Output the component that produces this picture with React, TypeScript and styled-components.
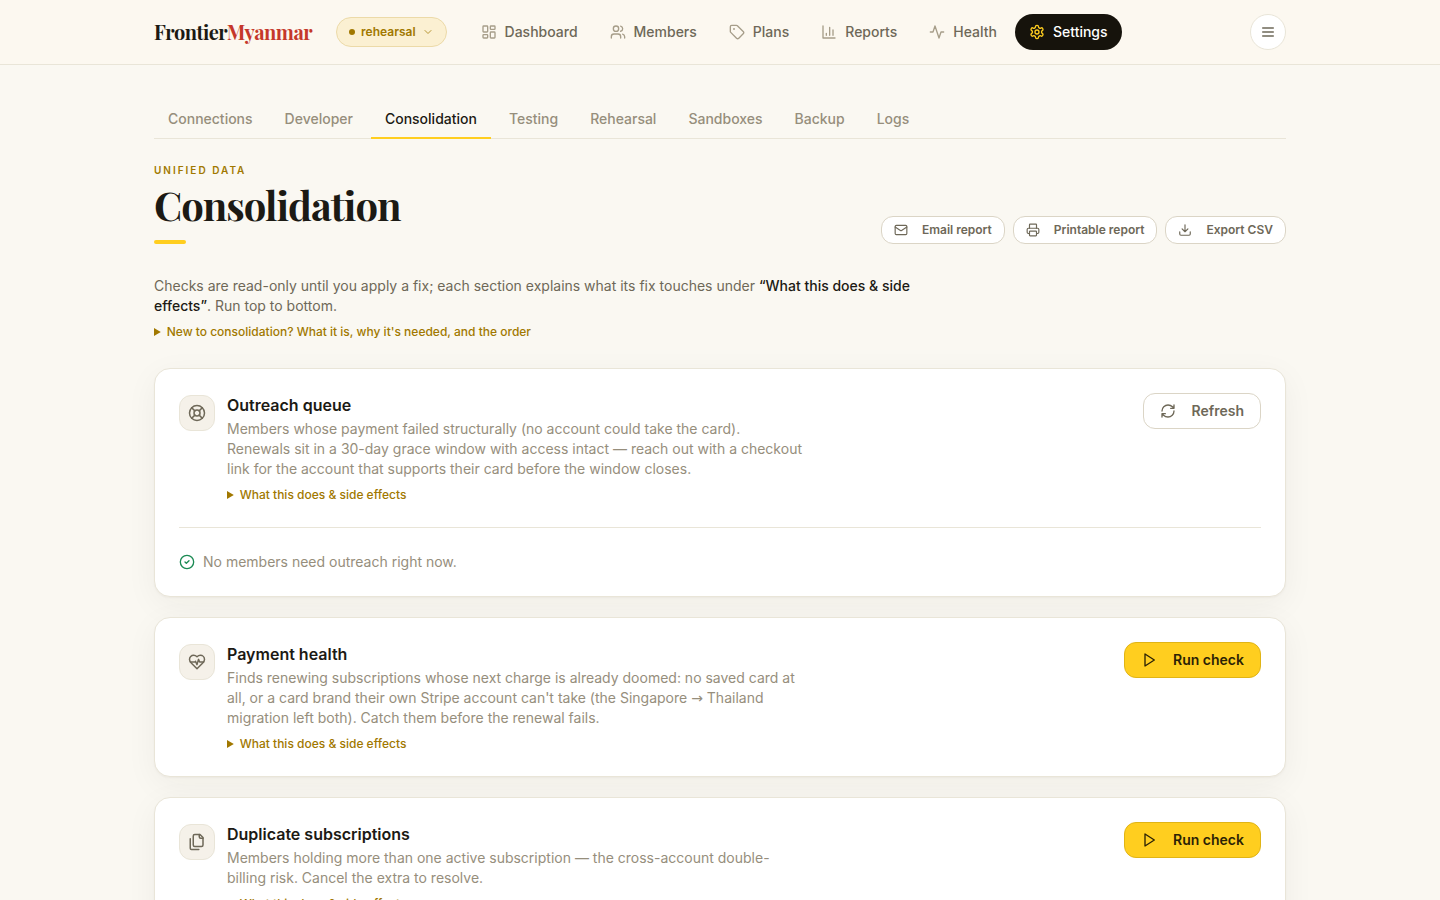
import React from "react";
import styled, { createGlobalStyle, css } from "styled-components";

const color = {
  ink: "#1c1a14",
  muted: "#6e6858",
  faint: "#968e7c",
  line: "#e9e5d8",
  gold: "#a17800",
  yellow: "#ffce1f",
};

const GlobalStyle = createGlobalStyle`
  *, *::before, *::after { box-sizing: border-box; }
  body {
    margin: 0;
    background: #faf8f2;
    color: ${color.ink};
    font: 14px/20px Inter, "Liberation Sans", sans-serif;
    -webkit-font-smoothing: antialiased;
  }
  h1, h2, p { margin: 0; }
  button { font-family: inherit; cursor: pointer; }
`;

const serif = css`
  font-family: "Playfair Display", "Liberation Serif", serif;
  font-weight: 700;
  letter-spacing: -0.025em;
`;

const icons = {
  dashboard: (
    <>
      <rect width="7" height="9" x="3" y="3" rx="1" />
      <rect width="7" height="5" x="14" y="3" rx="1" />
      <rect width="7" height="9" x="14" y="12" rx="1" />
      <rect width="7" height="5" x="3" y="16" rx="1" />
    </>
  ),
  users: (
    <>
      <path d="M16 21v-2a4 4 0 0 0-4-4H6a4 4 0 0 0-4 4v2" />
      <circle cx="9" cy="7" r="4" />
      <path d="M22 21v-2a4 4 0 0 0-3-3.87M16 3.13a4 4 0 0 1 0 7.75" />
    </>
  ),
  tag: (
    <>
      <path d="M12.586 2.586A2 2 0 0 0 11.172 2H4a2 2 0 0 0-2 2v7.172a2 2 0 0 0 .586 1.414l8.704 8.704a2.426 2.426 0 0 0 3.42 0l6.58-6.58a2.426 2.426 0 0 0 0-3.42z" />
      <circle cx="7.5" cy="7.5" r=".5" fill="currentColor" />
    </>
  ),
  chart: <path d="M3 3v18h18M18 17V9M13 17V5M8 17v-3" />,
  activity: <path d="M22 12h-4l-3 9L9 3l-3 9H2" />,
  settings: (
    <>
      <path d="M12.22 2h-.44a2 2 0 0 0-2 2v.18a2 2 0 0 1-1 1.73l-.43.25a2 2 0 0 1-2 0l-.15-.08a2 2 0 0 0-2.73.73l-.22.38a2 2 0 0 0 .73 2.73l.15.1a2 2 0 0 1 1 1.72v.51a2 2 0 0 1-1 1.74l-.15.09a2 2 0 0 0-.73 2.73l.22.38a2 2 0 0 0 2.73.73l.15-.08a2 2 0 0 1 2 0l.43.25a2 2 0 0 1 1 1.73V20a2 2 0 0 0 2 2h.44a2 2 0 0 0 2-2v-.18a2 2 0 0 1 1-1.73l.43-.25a2 2 0 0 1 2 0l.15.08a2 2 0 0 0 2.73-.73l.22-.39a2 2 0 0 0-.73-2.73l-.15-.08a2 2 0 0 1-1-1.74v-.5a2 2 0 0 1 1-1.74l.15-.09a2 2 0 0 0 .73-2.73l-.22-.38a2 2 0 0 0-2.73-.73l-.15.08a2 2 0 0 1-2 0l-.43-.25a2 2 0 0 1-1-1.73V4a2 2 0 0 0-2-2z" />
      <circle cx="12" cy="12" r="3" />
    </>
  ),
  menu: <path d="M4 6h16M4 12h16M4 18h16" />,
  chevron: <path d="m6 9 6 6 6-6" />,
  mail: (
    <>
      <rect width="20" height="16" x="2" y="4" rx="2" />
      <path d="m22 7-8.97 5.7a1.94 1.94 0 0 1-2.06 0L2 7" />
    </>
  ),
  printer: (
    <>
      <path d="M6 18H4a2 2 0 0 1-2-2v-5a2 2 0 0 1 2-2h16a2 2 0 0 1 2 2v5a2 2 0 0 1-2 2h-2" />
      <path d="M6 9V3a1 1 0 0 1 1-1h10a1 1 0 0 1 1 1v6" />
      <rect width="12" height="8" x="6" y="14" rx="1" />
    </>
  ),
  download: <path d="M21 15v4a2 2 0 0 1-2 2H5a2 2 0 0 1-2-2v-4M7 10l5 5 5-5M12 15V3" />,
  buoy: (
    <>
      <circle cx="12" cy="12" r="10" />
      <path d="m4.93 4.93 4.24 4.24M14.83 9.17l4.24-4.24M14.83 14.83l4.24 4.24M9.17 14.83l-4.24 4.24" />
      <circle cx="12" cy="12" r="4" />
    </>
  ),
  heart: (
    <>
      <path d="M19 14c1.49-1.46 3-3.21 3-5.5A5.5 5.5 0 0 0 16.5 3c-1.76 0-3 .5-4.5 2-1.5-1.5-2.74-2-4.5-2A5.5 5.5 0 0 0 2 8.5c0 2.3 1.5 4.05 3 5.5l7 7Z" />
      <path d="M3.22 12H9.5l.5-1 2 4.5 2-7 1.5 3.5h5.27" />
    </>
  ),
  files: (
    <>
      <path d="M20 7h-3a2 2 0 0 1-2-2V2" />
      <path d="M9 18a2 2 0 0 1-2-2V4a2 2 0 0 1 2-2h7l4 4v10a2 2 0 0 1-2 2Z" />
      <path d="M3 7.6v12.8A1.6 1.6 0 0 0 4.6 22h9.8" />
    </>
  ),
  refresh: (
    <path d="M3 12a9 9 0 0 1 9-9 9.75 9.75 0 0 1 6.74 2.74L21 8M21 3v5h-5M21 12a9 9 0 0 1-9 9 9.75 9.75 0 0 1-6.74-2.74L3 16M8 16H3v5" />
  ),
  play: <path d="m6 3 14 9-14 9V3z" />,
  check: (
    <>
      <circle cx="12" cy="12" r="10" />
      <path d="m9 12 2 2 4-4" />
    </>
  ),
};
type IconName = keyof typeof icons;

const Svg = styled.svg`
  flex: none;
  fill: none;
  stroke: currentColor;
  stroke-width: 2;
  stroke-linecap: round;
  stroke-linejoin: round;
`;

function Icon({ name, size = 16 }: { name: IconName; size?: number }) {
  return (
    <Svg width={size} height={size} viewBox="0 0 24 24" aria-hidden="true">
      {icons[name]}
    </Svg>
  );
}

const Header = styled.header`
  background: #fcf8f0;
  border-bottom: 1px solid ${color.line};
`;

const container = css`
  max-width: 1180px;
  margin: 0 auto;
  padding: 0 24px;
`;

const HeaderInner = styled.div`
  ${container}
  height: 64px;
  display: flex;
  align-items: center;
`;

const Logo = styled.a`
  ${serif}
  font-size: 20px;
  line-height: 28px;
  color: ${color.ink};
  text-decoration: none;
  margin-right: 24px;
  span { color: #c5382b; }
`;

const EnvButton = styled.button`
  display: flex;
  align-items: center;
  height: 30px;
  padding: 0 12px;
  margin-right: 20px;
  border: 1px solid #ecdaa8;
  border-radius: 15px;
  background: #fbf0d2;
  color: ${color.gold};
  font-size: 12px;
  font-weight: 600;
  line-height: 16px;
  svg { margin-left: 6px; opacity: 0.75; }
`;

const Dot = styled.span`
  width: 6px;
  height: 6px;
  margin-right: 6px;
  border-radius: 50%;
  background: ${color.gold};
`;

const Nav = styled.nav`
  display: flex;
  gap: 4px;
`;

const NavLink = styled.a<{ $active?: boolean }>`
  display: flex;
  align-items: center;
  gap: 8px;
  height: 36px;
  padding: 0 14px;
  border-radius: 18px;
  font-weight: 500;
  text-decoration: none;
  color: ${(p) => (p.$active ? "#fff" : color.muted)};
  background: ${(p) => (p.$active ? "#16130c" : "transparent")};
  svg { color: ${(p) => (p.$active ? color.yellow : "#a69d89")}; }
`;

const MenuButton = styled.button`
  display: grid;
  place-items: center;
  width: 36px;
  height: 36px;
  margin-left: auto;
  padding: 0;
  border: 1px solid ${color.line};
  border-radius: 50%;
  background: #fff;
  color: ${color.muted};
`;

const Main = styled.main`
  ${container}
  padding-top: 36px;
  padding-bottom: 48px;
`;

const Tabs = styled.nav`
  display: flex;
  gap: 4px;
  border-bottom: 1px solid ${color.line};
`;

const Tab = styled.a<{ $active?: boolean }>`
  padding: 8px 14px;
  margin-bottom: -1px;
  border-bottom: 2px solid ${(p) => (p.$active ? color.yellow : "transparent")};
  color: ${(p) => (p.$active ? color.ink : color.faint)};
  font-weight: 500;
  text-decoration: none;
`;

const PageHead = styled.div`
  display: flex;
  align-items: flex-end;
  justify-content: space-between;
  margin: 24px 0 32px;
`;

const Eyebrow = styled.p`
  font-size: 10px;
  line-height: 14px;
  font-weight: 600;
  letter-spacing: 0.2em;
  text-transform: uppercase;
  color: ${color.gold};
`;

const Title = styled.h1`
  ${serif}
  font-size: 40px;
  line-height: 44px;
  margin: 6px 0 13px;
`;

const Accent = styled.div`
  width: 32px;
  height: 4px;
  border-radius: 2px;
  background: ${color.yellow};
`;

const Actions = styled.div`
  display: flex;
  gap: 8px;
`;

const Button = styled.button<{ $small?: boolean; $primary?: boolean }>`
  display: inline-flex;
  flex: none;
  align-items: center;
  gap: ${(p) => (p.$small ? 14 : 16)}px;
  height: ${(p) => (p.$small ? 28 : 36)}px;
  padding: 0 ${(p) => (p.$small ? 12 : 16)}px;
  border: 1px solid ${(p) => (p.$primary ? "#e0b416" : "#dbd5c6")};
  border-radius: 12px;
  background: ${(p) => (p.$primary ? color.yellow : "#fff")};
  color: ${(p) => (p.$primary ? "#2b2205" : color.muted)};
  font-size: ${(p) => (p.$small ? 12 : 14)}px;
  line-height: ${(p) => (p.$small ? 16 : 20)}px;
  font-weight: 600;
`;

const Intro = styled.p`
  max-width: 768px;
  color: ${color.muted};
  strong { font-weight: 500; color: ${color.ink}; }
`;

const Details = styled.details`
  margin-top: 8px;
  font-size: 12px;
  line-height: 16px;
  summary {
    color: ${color.gold};
    font-weight: 500;
    cursor: pointer;
  }
`;

const Cards = styled.div`
  display: grid;
  gap: 20px;
  margin-top: 28px;
`;

const Card = styled.section`
  padding: 24px;
  border: 1px solid ${color.line};
  border-radius: 16px;
  background: #fff;
  box-shadow: 0 1px 2px rgba(40, 32, 12, 0.04), 0 8px 32px rgba(40, 32, 12, 0.05);
`;

const CardHead = styled.div`
  display: flex;
  align-items: flex-start;
  gap: 12px;
`;

const Badge = styled.div`
  display: grid;
  flex: none;
  place-items: center;
  width: 36px;
  height: 36px;
  margin-top: 2px;
  border: 1px solid ${color.line};
  border-radius: 12px;
  background: #f5f1e9;
  color: ${color.muted};
`;

const CardText = styled.div`
  flex: 1;
`;

const CardTitle = styled.h2`
  font-size: 16px;
  line-height: 24px;
  font-weight: 600;
`;

const Description = styled.p`
  max-width: 576px;
  margin-top: 2px;
  color: ${color.faint};
`;

const Arrow = styled.span`
  font-family: "DejaVu Sans", sans-serif;
  line-height: 1;
`;

const Status = styled.p`
  display: flex;
  align-items: center;
  gap: 8px;
  margin-top: 24px;
  padding-top: 24px;
  border-top: 1px solid ${color.line};
  color: ${color.faint};
  svg { color: #1b8a53; }
`;

const navItems: { label: string; icon: IconName; active?: boolean }[] = [
  { label: "Dashboard", icon: "dashboard" },
  { label: "Members", icon: "users" },
  { label: "Plans", icon: "tag" },
  { label: "Reports", icon: "chart" },
  { label: "Health", icon: "activity" },
  { label: "Settings", icon: "settings", active: true },
];

const tabs = ["Connections", "Developer", "Consolidation", "Testing", "Rehearsal", "Sandboxes", "Backup", "Logs"];

const actions: { label: string; icon: IconName }[] = [
  { label: "Email report", icon: "mail" },
  { label: "Printable report", icon: "printer" },
  { label: "Export CSV", icon: "download" },
];

const checks: { title: string; icon: IconName; text: React.ReactNode; status?: string }[] = [
  {
    title: "Outreach queue",
    icon: "buoy",
    text: "Members whose payment failed structurally (no account could take the card). Renewals sit in a 30-day grace window with access intact — reach out with a checkout link for the account that supports their card before the window closes.",
    status: "No members need outreach right now.",
  },
  {
    title: "Payment health",
    icon: "heart",
    text: (
      <>
        Finds renewing subscriptions whose next charge is already doomed: no saved card at all, or a card brand their
        own Stripe account can't take (the Singapore <Arrow>→</Arrow> Thailand migration left both). Catch them before
        the renewal fails.
      </>
    ),
  },
  {
    title: "Duplicate subscriptions",
    icon: "files",
    text: "Members holding more than one active subscription — the cross-account double-billing risk. Cancel the extra to resolve.",
  },
];

export default function App() {
  return (
    <>
      <GlobalStyle />
      <Header>
        <HeaderInner>
          <Logo href="#">
            Frontier<span>Myanmar</span>
          </Logo>
          <EnvButton type="button">
            <Dot />
            rehearsal
            <Icon name="chevron" size={12} />
          </EnvButton>
          <Nav aria-label="Main">
            {navItems.map((item) => (
              <NavLink key={item.label} href="#" $active={item.active} aria-current={item.active ? "page" : undefined}>
                <Icon name={item.icon} />
                {item.label}
              </NavLink>
            ))}
          </Nav>
          <MenuButton type="button" aria-label="Menu">
            <Icon name="menu" />
          </MenuButton>
        </HeaderInner>
      </Header>
      <Main>
        <Tabs aria-label="Settings">
          {tabs.map((tab) => (
            <Tab key={tab} href="#" $active={tab === "Consolidation"}>
              {tab}
            </Tab>
          ))}
        </Tabs>
        <PageHead>
          <div>
            <Eyebrow>Unified data</Eyebrow>
            <Title>Consolidation</Title>
            <Accent />
          </div>
          <Actions>
            {actions.map((action) => (
              <Button key={action.label} type="button" $small>
                <Icon name={action.icon} size={14} />
                {action.label}
              </Button>
            ))}
          </Actions>
        </PageHead>
        <Intro>
          Checks are read-only until you apply a fix; each section explains what its fix touches under{" "}
          <strong>“What this does &amp; side effects”</strong>. Run top to bottom.
        </Intro>
        <Details>
          <summary>New to consolidation? What it is, why it's needed, and the order</summary>
        </Details>
        <Cards>
          {checks.map((check) => (
            <Card key={check.title}>
              <CardHead>
                <Badge>
                  <Icon name={check.icon} size={18} />
                </Badge>
                <CardText>
                  <CardTitle>{check.title}</CardTitle>
                  <Description>{check.text}</Description>
                  <Details>
                    <summary>What this does &amp; side effects</summary>
                  </Details>
                </CardText>
                <Button type="button" $primary={!check.status}>
                  <Icon name={check.status ? "refresh" : "play"} />
                  {check.status ? "Refresh" : "Run check"}
                </Button>
              </CardHead>
              {check.status && (
                <Status>
                  <Icon name="check" />
                  {check.status}
                </Status>
              )}
            </Card>
          ))}
        </Cards>
      </Main>
    </>
  );
}
